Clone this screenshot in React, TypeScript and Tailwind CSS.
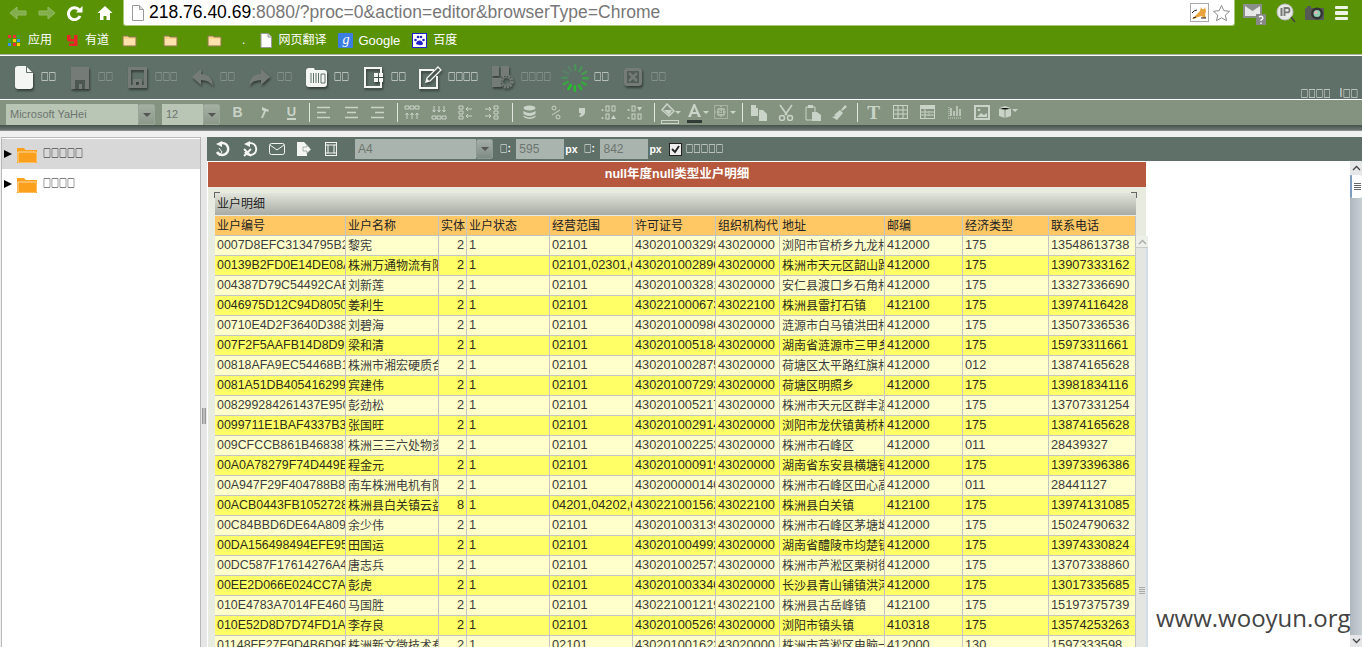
import React from 'react';

// --- Data ---
type Row = [string, string, string, string, string, string, string, string, string, string, string];

const headers = ['业户编号', '业户名称', '实体', '业户状态', '经营范围', '许可证号', '组织机构代', '地址', '邮编', '经济类型', '联系电话'];

const rows: Row[] = [
    ['0007D8EFC3134795B2A', '黎宪', '2', '1', '02101', '430201003298', '43020000', '浏阳市官桥乡九龙村组', '412000', '175', '13548613738'],
    ['00139B2FD0E14DE08A1', '株洲万通物流有限公司', '2', '1', '02101,02301,0', '430201002896', '43020000', '株洲市天元区韶山路口', '412000', '175', '13907333162'],
    ['004387D79C54492CAB1', '刘新莲', '2', '1', '02101', '430201003281', '43020000', '安仁县渡口乡石角村组', '412000', '175', '13327336690'],
    ['0046975D12C94D80501', '姜利生', '2', '1', '02101', '430221000673', '43022100', '株洲县雷打石镇', '412100', '175', '13974116428'],
    ['00710E4D2F3640D3881', '刘碧海', '2', '1', '02101', '430201000980', '43020000', '涟源市白马镇洪田村组', '412000', '175', '13507336536'],
    ['007F2F5AAFB14D8D911', '梁和清', '2', '1', '02101', '430201005184', '43020000', '湖南省涟源市三甲乡村', '412000', '175', '15973311661'],
    ['00818AFA9EC54468B11', '株洲市湘宏硬质合金', '2', '1', '02101', '430201002875', '43020000', '荷塘区太平路红旗村组', '412000', '012', '13874165628'],
    ['0081A51DB4054162991', '宾建伟', '2', '1', '02101', '430201007293', '43020000', '荷塘区明照乡', '412000', '175', '13981834116'],
    ['008299284261437E950', '彭劲松', '2', '1', '02101', '430201005217', '43020000', '株洲市天元区群丰渡口', '412000', '175', '13707331254'],
    ['0099711E1BAF4337B31', '张国旺', '2', '1', '02101', '430201002914', '43020000', '浏阳市龙伏镇黄桥村组', '412000', '175', '13874165628'],
    ['009CFCCB861B4683871', '株洲三三六处物资公司', '2', '1', '02101', '430201002253', '43020000', '株洲市石峰区', '412000', '011', '28439327'],
    ['00A0A78279F74D449E1', '程金元', '2', '1', '02101', '430201000919', '43020000', '湖南省东安县横塘镇村', '412000', '175', '13973396386'],
    ['00A947F29F404788B81', '南车株洲电机有限公司', '2', '1', '02101', '430200000140', '43020000', '株洲市石峰区田心高科', '412000', '011', '28441127'],
    ['00ACB0443FB10527281', '株洲县白关镇云益公司', '8', '1', '04201,04202,0', '430221001562', '43022100', '株洲县白关镇', '412100', '175', '13974131085'],
    ['00C84BBD6DE64A809', '余少伟', '2', '1', '02101', '430201003139', '43020000', '株洲市石峰区茅塘坳村', '412000', '175', '15024790632'],
    ['00DA156498494EFE951', '田国运', '2', '1', '02101', '430201004992', '43020000', '湖南省醴陵市均楚镇村', '412000', '175', '13974330824'],
    ['00DC587F17614276A41', '唐志兵', '2', '1', '02101', '430201002573', '43020000', '株洲市芦淞区栗树街口', '412000', '175', '13707338860'],
    ['00EE2D066E024CC7AF1', '彭虎', '2', '1', '02101', '430201003340', '43020000', '长沙县青山铺镇洪河村', '412000', '175', '13017335685'],
    ['010E4783A7014FE460', '马国胜', '2', '1', '02101', '430221001219', '43022100', '株洲县古岳峰镇', '412100', '175', '15197375739'],
    ['010E52D8D7D74FD1A', '李存良', '2', '1', '02101', '430201005265', '43020000', '浏阳市镇头镇', '410318', '175', '13574253263'],
    ['01148FF27F9D4B6D9F1', '株洲新文微技术有限公司', '2', '1', '02101', '430201001623', '43020000', '株洲市芦淞区电脑一条', '412000', '130', '1597333598'],
];

// --- Helpers ---
const Tofu: React.FC<{ n: number; className?: string; size?: string }> = ({ n, className, size }) => (
    <span className={`inline-block flex-none scale-y-[1.25] whitespace-nowrap font-bold [font-family:'Noto_Sans_CJK_SC',sans-serif] leading-none ${size ?? 'text-[7.5px]'} ${className ?? ''}`}>{'□'.repeat(n)}</span>
);

const Ico: React.FC<{ w: number; h: number; children: React.ReactNode; className?: string }> = ({ w, h, children, className }) => (
    <svg width={w} height={h} viewBox={`0 0 ${w} ${h}`} className={`block flex-none ${className ?? ''}`}>{children}</svg>
);

const shadow = 'drop-shadow-[1px_2px_1px_rgba(0,0,0,0.45)]';
const G = '#757b77';
const W = '#f4f6f4';

// --- Browser chrome ---
const Folder = () => (
    <Ico w={15} h={13}>
        <path d="M1 2h5l1 1h7v9H1z" fill="#fbd48c" stroke="#8a7a50" />
        <path d="M2 5h11v6H2z" fill="#fde2ae" />
    </Ico>
);

const BrowserBar = () => (
    <div className="h-[54px] flex-none bg-[#5a9206] text-white">
        <div className="flex h-[26px]">
            <div className="flex w-[123px] flex-none items-center">
                <Ico w={18} h={16} className="ml-[9px]"><path d="M1 8l7-6v4h9v4H8v4z" fill="#82ad4c" stroke="#93ba62" /></Ico>
                <Ico w={18} h={16} className="ml-[11px]"><path d="M17 8l-7-6v4H1v4h9v4z" fill="#82ad4c" stroke="#93ba62" /></Ico>
                <Ico w={16} h={16} className="ml-[11px]">
                    <path d="M13 11a6 6 0 1 1-.8-6" fill="none" stroke="#fff" strokeWidth="3" />
                    <path d="M15.500 1v6.500H9z" fill="#fff" />
                </Ico>
                <Ico w={16} h={16} className="ml-[14px]"><path d="M8 1l7.500 7H13v7H9.500v-4h-3v4H3V8H.5z" fill="#fff" /></Ico>
            </div>
            <div className="flex h-[26px] w-[1112px] flex-none items-center rounded-b-[3px] border border-t-0 border-[#a8c878] bg-white">
                <Ico w={14} h={16} className="ml-[7px]">
                    <path d="M1.500 .5h7l4 4v11h-11z" fill="#fff" stroke="#9a9a9a" />
                    <path d="M8.500 .5v4h4" fill="#ddd" stroke="#9a9a9a" />
                </Ico>
                <span className="ml-[4px] mt-[1px] text-[17.5px] leading-none text-[#777]"><span className="text-black">218.76.40.69</span>:8080/?proc=0&amp;action=editor&amp;browserType=Chrome</span>
                <Ico w={19} h={19} className="ml-auto">
                    <rect x=".5" y=".5" width="18" height="18" fill="#fff" stroke="#aaa" />
                    <path d="M11 4l1 2h2l1-2 1 4-1 4 1 3h-3l-1-2-4 1-4 2H2l3-3 3-3 2-2z" fill="#e5a43c" />
                    <path d="M2 10q2-3 5-3M3 15l3-1M11 15h5" stroke="#222" fill="none" />
                </Ico>
                <Ico w={19} h={18} className="ml-[3px] mr-[3px]"><path d="M9.500 1.500l2.400 5.200 5.600.6-4.200 3.800 1.200 5.600-5-2.900-5 2.900 1.200-5.600L1.500 7.300l5.600-.6z" fill="#fff" stroke="#8a8a8a" /></Ico>
            </div>
            <div className="flex flex-1 items-center">
                <Ico w={25} h={24} className="ml-[7px] mt-[2px]">
                    <path d="M1 2h19v14H1z" fill="#8a8f8a" />
                    <path d="M3 4l7.500 5L18 4v10H3z" fill="#e8e8e8" />
                    <rect x="14" y="12" width="10" height="11" fill="#888" />
                    <path d="M17 15q2-1.500 3.500 0t-1.500 3v1M19 20.500v1.500" stroke="#fff" strokeWidth="1.300" fill="none" />
                </Ico>
                <Ico w={20} h={22} className="ml-[9px]">
                    <circle cx="9" cy="10" r="8" fill="#e6eae6" stroke="#bbb" />
                    <path d="M15 15l4 5" stroke="#444" strokeWidth="1.500" />
                    <path d="M5.500 6v8" stroke="#777" strokeWidth="2" />
                    <path d="M8.500 14V6h3q2 0 2 2.200t-2 2.200h-3" stroke="#777" strokeWidth="1.800" fill="none" />
                </Ico>
                <Ico w={20} h={16} className="ml-[9px]">
                    <rect x="0" y="3" width="19" height="12" rx="1" fill="#555a55" />
                    <rect x="2" y="1" width="4" height="3" fill="#555a55" />
                    <circle cx="12" cy="8.500" r="6" fill="#333" />
                    <circle cx="12" cy="8.500" r="3.500" fill="#8fd0b0" />
                    <circle cx="11" cy="7.500" r="1.500" fill="#f0b0c0" />
                </Ico>
                <div className="ml-[10px] flex flex-col gap-[2px]">
                    <div className="h-[3.500px] w-[13px] rounded-[1px] bg-[#eef4e4]" />
                    <div className="h-[3.500px] w-[13px] rounded-[1px] bg-[#eef4e4]" />
                    <div className="h-[3.500px] w-[13px] rounded-[1px] bg-[#eef4e4]" />
                </div>
            </div>
        </div>
        <div className="flex h-[28px] items-center text-[12px] leading-none">
            <div className="ml-[8px] grid w-[13px] grid-cols-3 gap-[1px]">
                {['#e33', '#e33', '#3a3', '#3a3', '#fc0', '#39e', '#39e', '#e33', '#fc0'].map((c, i) => (
                    <div key={i} className="h-[3px] w-[3px]" style={{ background: c }} />
                ))}
            </div>
            <span className="ml-[7px]">应用</span>
            <Ico w={11} h={13} className="ml-[15px]"><path d="M0 1h3.500v4H7V1h3.500v11H2V9.500h5v-2H2Q0 7.500 0 5.500z" fill="#e8262a" /></Ico>
            <span className="ml-[7px]">有道</span>
            <div className="ml-[13px]"><Folder /></div>
            <div className="ml-[26px]"><Folder /></div>
            <div className="ml-[29px]"><Folder /></div>
            <span className="ml-[20px]">.</span>
            <Ico w={12} h={15} className="ml-[15px]">
                <path d="M1 .5h7l3.500 3.500v10.500H1z" fill="#fff" stroke="#999" />
                <path d="M8 .5V4h3.500" fill="#ddd" stroke="#999" />
            </Ico>
            <span className="ml-[6px]">网页翻译</span>
            <div className="ml-[12px] flex h-[15px] w-[15px] items-center justify-center rounded-[1px] bg-[#3b7de0] [font-family:'Liberation_Serif',serif] text-[14px] italic">g</div>
            <span className="ml-[5px] text-[13px]">Google</span>
            <Ico w={15} h={15} className="ml-[12px]">
                <rect x=".5" y=".5" width="14" height="14" fill="#fff" stroke="#22c" />
                <path d="M7.500 7.500q3 0 3.500 3.500-.5 1.500-3.500 1t-3.500-1q.5-3.500 3.500-3.500z" fill="#22c" />
                <circle cx="3.500" cy="7" r="1.300" fill="#22c" /><circle cx="6" cy="4" r="1.300" fill="#22c" /><circle cx="9" cy="4" r="1.300" fill="#22c" /><circle cx="11.500" cy="7" r="1.300" fill="#22c" />
            </Ico>
            <span className="ml-[6px]">百度</span>
        </div>
    </div>
);

// --- Main toolbar ---
const mainTools: { w: string; icon: React.ReactNode; n: number; on: boolean; gap: string }[] = [
    { w: 'w-[56px]', n: 2, on: true, gap: 'ml-[8px]', icon: <Ico w={18} h={23} className={shadow}><path d="M0 3q0-3 3-3h8l7 7v13q0 3-3 3H3q-3 0-3-3z" fill={W} /><path d="M11.500 0v6.500H18" fill="none" stroke="#5f7068" /></Ico> },
    { w: 'w-[57px]', n: 2, on: false, gap: 'ml-[9px]', icon: <Ico w={18} h={22} className={shadow}><path d="M0 0h18v22H0z" fill={G} /><path d="M4 13h10v9h-3v-5H8v5H4z" fill="#4c5751" /></Ico> },
    { w: 'w-[64px]', n: 3, on: false, gap: 'ml-[8px]', icon: <Ico w={19} h={21} className={shadow}><path d="M1.500 1.500h16v18h-16z" fill="none" stroke={G} strokeWidth="3" /><path d="M5 12h9v7h-3v-4H8v4H5z" fill={G} /></Ico> },
    { w: 'w-[57px]', n: 2, on: false, gap: 'ml-[7px]', icon: <Ico w={21} h={19} className={shadow}><path d="M9 1v5q11 0 12 12-4-6-12-6v5L0 9z" fill={G} /></Ico> },
    { w: 'w-[57px]', n: 2, on: false, gap: 'ml-[7px]', icon: <Ico w={21} h={19} className={shadow}><path d="M12 1v5Q1 6 0 18q4-6 12-6v5l9-8z" fill={G} /></Ico> },
    { w: 'w-[58px]', n: 2, on: true, gap: 'ml-[7px]', icon: <Ico w={21} h={19} className={shadow}><path d="M0 3q0-3 3-3h5l1 2h9q3 0 3 3v11q0 3-3 3H3q-3 0-3-3z" fill={W} /><path d="M5 5v10M7.500 5v10M10 5v10M12.500 5v10" stroke="#5f7068" /><path d="M15 6h4v9h-4z" fill="none" stroke="#5f7068" /></Ico> },
    { w: 'w-[55px]', n: 2, on: true, gap: 'ml-[8px]', icon: <Ico w={19} h={21} className={shadow}><path d="M17 6V1H1v19h16v-5" fill="none" stroke={W} strokeWidth="2" /><rect x="10" y="6" width="4" height="4" fill={W} /><rect x="15" y="6" width="4" height="4" fill={W} /><rect x="10" y="11" width="4" height="4" fill={W} /><rect x="15" y="11" width="4" height="4" fill={W} /></Ico> },
    { w: 'w-[73px]', n: 4, on: true, gap: 'ml-[5px]', icon: <Ico w={24} h={23} className={shadow}><path d="M15 4H1v18h17V10" fill="none" stroke={W} strokeWidth="2" /><path d="M7 16l1-4L19 1l3 3L11 15z" fill="none" stroke={W} strokeWidth="1.300" /><path d="M7 16l1.500-3 1.500 1.500z" fill={W} /></Ico> },
    { w: 'w-[68px]', n: 4, on: false, gap: 'ml-[7px]', icon: <Ico w={22} h={23} className={shadow}><rect x="0" y="0" width="7" height="10" fill={G} /><rect x="9" y="0" width="8" height="10" fill={G} /><rect x="0" y="12" width="9" height="9" fill={G} /><circle cx="14.500" cy="15.500" r="5.500" fill="none" stroke={G} strokeWidth="3" strokeDasharray="2 1" /><circle cx="14.500" cy="15.500" r="4" fill="none" stroke={G} /></Ico> },
    { w: 'w-[64px]', n: 2, on: true, gap: 'ml-[4px]', icon: (
        <Ico w={30} h={30}>
            {[0, 30, 60, 90, 120, 150, 180, 210, 240, 270, 300, 330].map((a, i) => (
                <rect key={a} x="14" y="1" width="2.400" height="7" rx="1" transform={`rotate(${a} 15 15)`} fill={['#4d8f5a', '#4d8f5a', '#4a9a52', '#3fa048', '#35a83c', '#2cb032', '#26bc2a', '#1fc824', '#38a63e', '#4d8a5c', '#5a8068', '#5a8068'][i]} />
            ))}
        </Ico>
    ) },
    { w: 'w-[60px]', n: 2, on: false, gap: 'ml-[9px]', icon: <Ico w={18} h={19} className={shadow}><rect x="1.500" y="1.500" width="15" height="15" rx="2" fill="#505c56" stroke={G} strokeWidth="3" /><path d="M5 5l8 8M13 5l-8 8" stroke={G} strokeWidth="2.500" /></Ico> },
];

const MainToolbar = () => (
    <div className="flex h-[43px] flex-none items-center bg-[#5f7068] pl-[15px]">
        {mainTools.map((t, i) => (
            <div key={i} className={`flex flex-none items-center ${t.w}`}>
                {t.icon}
                <Tofu n={t.n} className={`${t.gap} -mt-[4px] ${t.on ? 'text-white' : 'text-[#a3aeaa]'}`} />
            </div>
        ))}
        <div className="ml-auto mr-[4px] mt-[30px] flex items-center text-white">
            <Tofu n={4} />
            <span className="ml-[9px] text-[9px] leading-none">|</span>
            <Tofu n={2} className="ml-[1px]" />
        </div>
    </div>
);

// --- Format toolbar ---
const C = '#c9d3c8';
const DK = '#84937f';

const Sep: React.FC<{ className: string }> = ({ className }) => <div className={`h-[19px] w-[1px] flex-none bg-[#dfe6dc] ${className}`} />;

const Cell: React.FC<{ children: React.ReactNode; half?: boolean }> = ({ children, half }) => (
    <div className={`flex flex-none items-center justify-center ${half ? 'w-[26.500px]' : 'w-[27px]'}`}>{children}</div>
);

const Caret = ({ x, y }: { x: number; y: number }) => <path d={`M${x} ${y}h6l-3 3z`} fill={C} />;

const Combo: React.FC<{ label: string; w: string; input: string }> = ({ label, w, input }) => (
    <div className={`flex h-[21px] flex-none rounded-[1px] ${w}`}>
        <div className={`flex items-center bg-[#b9c6b6] pl-[4px] text-[11px] leading-none text-[#6d746e] ${input}`}>{label}</div>
        <div className="flex flex-1 items-center justify-center rounded-[2px] border border-[#9aa89a] bg-gradient-to-b from-[#a4b0a2] to-[#8b988a]">
            <div className="h-0 w-0 border-x-[4px] border-t-[4px] border-x-transparent border-t-[#555]" />
        </div>
    </div>
);

const bars = (a: number[], b: number[]) => (
    <Ico w={16} h={13}>
        <path d={`M${a[0]} 1.500h${a[1]}M${b[0]} 6.500h${b[1]}M${a[0]} 11.500h${a[1]}`} stroke={C} strokeWidth="1.500" />
    </Ico>
);

const stack4 = (
    <Ico w={16} h={15}>
        <path d="M1 1h4v3H1zM6 1h4v3H6zM11 1h4v3h-4z" fill="none" stroke={C} />
        <path d="M3 14V8M8 14V8M13 14V8M1.500 10L3 8l1.500 2M6.500 10L8 8l1.500 2M11.500 10L13 8l1.500 2" fill="none" stroke={C} />
    </Ico>
);

const FormatToolbar = () => (
    <div className="flex h-[25px] flex-none items-end bg-[#84937f] pl-[6px]">
        <Combo label="Microsoft YaHei" w="w-[149px]" input="w-[132px]" />
        <div className="ml-[7px]"><Combo label="12" w="w-[58px]" input="w-[41px]" /></div>
        <div className="mb-[1px] ml-[4px] flex items-center">
            <Cell><span className="text-[14px] font-bold leading-none text-[#c9d3c8]">B</span></Cell>
            <Cell><Ico w={12} h={14}><path d="M3 2l7 3-1 2-2-1-3 7H2l3-7-2-1z" fill={C} /></Ico></Cell>
            <Cell><span className="border-b-2 border-[#c9d3c8] text-[13px] font-bold leading-[13px] text-[#c9d3c8]">U</span></Cell>
            <Sep className="ml-[4px] mr-[2px]" />
            <Cell half>{bars([0, 13], [0, 9])}</Cell>
            <Cell half>{bars([1, 13], [3, 9])}</Cell>
            <Cell half>{bars([1, 13], [5, 9])}</Cell>
            <Sep className="ml-[5.500px] mr-[1px]" />
            <Cell half>{stack4}</Cell>
            <Cell half><div className="rotate-180">{stack4}</div></Cell>
            <Cell half><Ico w={15} h={15}><path d="M1 1h4v3H1zM1 6h4v3H1zM1 11h4v3H1z" fill="none" stroke={C} /><path d="M14 4H8M10 2L8 4l2 2M14 11H8M10 9l-2 2 2 2" fill="none" stroke={C} /></Ico></Cell>
            <Cell half><Ico w={15} h={15}><path d="M10 1h4v3h-4zM10 6h4v3h-4zM10 11h4v3h-4z" fill="none" stroke={C} /><path d="M1 4h6M5 2l2 2-2 2M1 11h6M5 9l2 2-2 2" fill="none" stroke={C} /></Ico></Cell>
            <Sep className="ml-[7px] mr-[3px]" />
            <Cell half><Ico w={13} h={15}><ellipse cx="6.500" cy="3" rx="6" ry="2.500" fill={C} /><path d="M.5 6q6 4 12 0v3q-6 4-12 0zM.5 10.500q6 4 12 0V12q-6 4-12 0z" fill={C} /></Ico></Cell>
            <Cell half><Ico w={10} h={15}><circle cx="3" cy="3" r="2" fill="none" stroke={C} /><circle cx="7" cy="12" r="2" fill="none" stroke={C} /><path d="M1 10L9 5" stroke={C} /></Ico></Cell>
            <Cell half><Ico w={10} h={11}><path d="M2 1h6v5q-1 3-5 4L2 9q2-1 2-3H2z" fill={C} /></Ico></Cell>
            <Cell half><Ico w={16} h={15}><circle cx="1.500" cy="5" r="1" fill={C} /><circle cx="1.500" cy="13" r="1" fill={C} /><rect x="5" y="1" width="3" height="5" fill="none" stroke={C} /><rect x="11" y="1" width="3" height="5" fill="none" stroke={C} /><rect x="5" y="9" width="3" height="5" fill="none" stroke={C} /><path d="M10 14l2.500-4 2.500 4z" fill={C} /></Ico></Cell>
            <Cell half><Ico w={16} h={15}><circle cx="1.500" cy="5" r="1" fill={C} /><circle cx="1.500" cy="13" r="1" fill={C} /><rect x="5" y="1" width="3" height="5" fill="none" stroke={C} /><rect x="5" y="9" width="3" height="5" fill="none" stroke={C} /><rect x="11" y="9" width="3" height="5" fill="none" stroke={C} /><path d="M10 2h5l-2.500 4z" fill={C} /></Ico></Cell>
            <Sep className="ml-[5.500px] mr-[2px]" />
            <Cell><Ico w={22} h={21} className="mt-[3px]"><path d="M7 1l7 7-5 5-7-6z" fill="none" stroke={C} strokeWidth="1.500" /><path d="M4 7h8l-3 5z" fill={C} /><Caret x={15} y={8} /><rect x="1.500" y="17.500" width="17" height="3" fill="none" stroke={C} /></Ico></Cell>
            <Cell><Ico w={22} h={21} className="mt-[3px]"><path d="M1 14L6.500 1h1.500L14 14h-3l-1-3H5l-1 3zM5.800 9h3.400L7.500 4.500z" fill={C} /><Caret x={16} y={8} /><rect x="0" y="17" width="15" height="3" fill="#2f3b34" /></Ico></Cell>
            <Cell><Ico w={22} h={15}><rect x=".5" y=".5" width="13" height="13" fill="none" stroke={C} strokeDasharray="1 1" /><path d="M7 1v12M1 7h12" stroke={C} strokeDasharray="1 1" /><rect x="4" y="4" width="6" height="6" fill="none" stroke={C} /><Caret x={16} y={6} /></Ico></Cell>
            <Sep className="ml-[4px] mr-[2px]" />
            <Cell><Ico w={16} h={17}><path d="M0 1h5v3h2v8H0z" fill={C} /><path d="M8 6h4l4 4v7H8z" fill={C} /></Ico></Cell>
            <Cell><Ico w={16} h={17}><path d="M2 1l7 10M14 1L7 11" stroke={C} strokeWidth="1.600" /><circle cx="4" cy="14" r="2.500" fill="none" stroke={C} strokeWidth="1.500" /><circle cx="12" cy="14" r="2.500" fill="none" stroke={C} strokeWidth="1.500" /></Ico></Cell>
            <Cell><Ico w={16} h={17}><path d="M1 3h9v13H1z" fill="none" stroke={C} /><rect x="3" y="1" width="5" height="3" fill={C} /><path d="M7 8h5l4 3v6H7z" fill={C} /></Ico></Cell>
            <Cell><Ico w={17} h={17}><path d="M10 6l4-5 2 2-5 4z" fill={C} /><path d="M9 6l3 3-6 7-5-3 4-1-2-1z" fill={C} /></Ico></Cell>
            <Sep className="ml-[4px] mr-[2px]" />
            <Cell><span className="[font-family:'Liberation_Serif',serif] text-[19px] font-bold leading-none text-[#c9d3c8]">T</span></Cell>
            <Cell><Ico w={15} h={14}><rect x=".5" y=".5" width="14" height="13" fill="none" stroke={C} /><path d="M5 1v12M10 1v12M1 5h13M1 9h13" stroke={C} /></Ico></Cell>
            <Cell><Ico w={15} h={14}><rect x=".5" y=".5" width="14" height="13" fill="none" stroke={C} /><rect x="1" y="1" width="13" height="3" fill={C} /><path d="M5 4v9M1 7h13M1 10h13" stroke={C} /><path d="M9 6v6" stroke={C} strokeDasharray="1 1" /></Ico></Cell>
            <Cell><Ico w={14} h={14}><path d="M3 3v8M6 6v5M9 1v10M12 4v7" stroke={C} strokeWidth="1.500" /><path d="M0 13h14" stroke={C} strokeDasharray="1 1" /><path d="M1 2v10" stroke={C} strokeDasharray="1 1" /></Ico></Cell>
            <Cell><Ico w={16} h={15}><rect x="1" y="1" width="14" height="13" fill="none" stroke={C} strokeWidth="2" /><path d="M3 12l4-4 3 2 3-2v4z" fill={C} /><circle cx="5" cy="5" r="1.300" fill={C} /></Ico></Cell>
            <Cell><Ico w={21} h={14}><path d="M1 3l6-2 6 2v8l-6 2-6-2z" fill={C} /><path d="M7 5v8M1 3l6 2 6-2" stroke={DK} /><Caret x={14} y={4} /></Ico></Cell>
        </div>
    </div>
);

// --- Sidebar ---
const TreeItem: React.FC<{ n: number; active?: boolean }> = ({ n, active }) => (
    <div className={`flex h-[30px] items-center pl-[2px] ${active ? 'bg-[#d8d8d8]' : ''}`}>
        <div className="h-0 w-0 border-y-[4.500px] border-l-[8px] border-y-transparent border-l-black" />
        <Ico w={20} h={17} className="ml-[5px]">
            <path d="M0 2h7l1.500 2H20v13H0z" fill="#fba01c" />
            <path d="M1 6h18v10H1z" fill="none" stroke="#ffd9a0" />
            <path d="M2 7h17v9H2z" fill="#fba01c" />
        </Ico>
        <Tofu n={n} size="text-[8px]" className="ml-[6px] -mt-[2px] text-black" />
    </div>
);

// --- Report toolbar ---
const ReportToolbar = () => (
    <div className="flex h-[24px] flex-none items-center bg-[#5f7068] text-white">
        <Ico w={16} h={16} className="ml-[7px]"><path d="M8 2a6 6 0 1 1-5 9" fill="none" stroke={W} strokeWidth="2.500" /><path d="M8 0v6L2 3z" fill={W} /><path d="M5 7l3 4-3 4" fill="none" stroke={W} /></Ico>
        <Ico w={16} h={16} className="ml-[12px]"><path d="M8 2a6 6 0 1 1-5 9" fill="none" stroke={W} strokeWidth="2" /><path d="M8 0v6L2 3z" fill={W} /><path d="M2 8l7 7M9 8l-7 7" stroke={W} strokeWidth="1.800" /></Ico>
        <Ico w={16} h={12} className="ml-[11px]"><rect x=".5" y=".5" width="15" height="11" rx="2" fill="none" stroke={W} /><path d="M1 2l7 5 7-5" fill="none" stroke={W} /></Ico>
        <Ico w={15} h={15} className="ml-[11px]"><path d="M1 0h7l3 3v3H7v3h4v5H1z" fill={W} /><path d="M7 5h4V2.500L15 7.500l-4 4V9H7z" fill={W} stroke="#5f7068" strokeWidth=".5" /></Ico>
        <Ico w={12} h={14} className="ml-[14px]"><rect x=".5" y=".5" width="11" height="13" fill="none" stroke={W} /><rect x="3" y="3" width="6" height="8" fill="none" stroke={W} /><path d="M1 3h2M1 11h2M9 3h2M9 11h2" stroke={W} /></Ico>
        <div className="ml-[18px] flex h-[20px] w-[138px] flex-none">
            <div className="flex w-[121px] items-center bg-[#aab4af] pl-[3px] text-[12px] leading-none text-[#6d746e]">A4</div>
            <div className="flex flex-1 items-center justify-center rounded-[2px] border border-[#8d9a92] bg-gradient-to-b from-[#a4aea8] to-[#7f8c85]">
                <div className="h-0 w-0 border-x-[4px] border-t-[4px] border-x-transparent border-t-[#555]" />
            </div>
        </div>
        <Tofu n={1} className="ml-[7px] -mt-[3px]" /><span className="text-[10px] font-bold leading-none">:</span>
        <div className="ml-[5.500px] flex h-[20px] w-[48px] flex-none items-center bg-[#aab4af] pl-[3px] text-[12px] leading-none text-[#6d746e]">595</div>
        <span className="ml-[1px] text-[10.500px] font-bold leading-none">px</span>
        <Tofu n={1} className="ml-[6.500px] -mt-[3px]" /><span className="text-[10px] font-bold leading-none">:</span>
        <div className="ml-[5.500px] flex h-[20px] w-[48px] flex-none items-center bg-[#aab4af] pl-[3px] text-[12px] leading-none text-[#6d746e]">842</div>
        <span className="ml-[1px] text-[10.500px] font-bold leading-none">px</span>
        <Ico w={13} h={13} className="ml-[7px]"><rect x=".5" y=".5" width="12" height="12" fill="#eee" stroke="#222" /><path d="M3 6l3 3 4-6" fill="none" stroke="#222" strokeWidth="1.800" /></Ico>
        <Tofu n={5} className="ml-[4px] -mt-[3px]" />
    </div>
);

// --- Table ---
const colClass = ['w-[131px]', 'w-[93px]', 'w-[28px]', 'w-[83px]', 'w-[83px]', 'w-[83px]', 'w-[64px]', 'w-[105px]', 'w-[78px]', 'w-[86px]', 'w-[87px]'];
const thClass = 'h-[20px] overflow-hidden whitespace-nowrap border-b border-r border-[#c4c4c4] px-[2px] text-left text-[12px] font-normal leading-none text-[#222]';

const cellSize = (j: number) => {
    if (j === 0) return 'text-[12.400px]';
    if (j === 1 || j === 7) return 'text-[12px]';
    return 'text-[12.800px]';
};

const DataTable = () => (
    <table className="w-[921px] table-fixed border-separate border-spacing-0">
        <colgroup>
            {colClass.map((c, i) => <col key={i} className={c} />)}
        </colgroup>
        <thead>
            <tr className="bg-[#ffc864]">
                {headers.map((h) => <th key={h} className={thClass}>{h}</th>)}
            </tr>
        </thead>
        <tbody>
            {rows.map((r, i) => (
                <tr key={r[0]} className={i % 2 === 0 ? 'bg-[#ffffcc] text-[#3c3c3c]' : 'bg-[#ffff66] text-[#2c2c18]'}>
                    {r.map((v, j) => (
                        <td
                            key={j}
                            className={`h-[20px] overflow-hidden whitespace-nowrap border-b border-r border-[#c4c4c4] px-[2px] leading-none ${cellSize(j)} ${j === 2 ? 'text-right' : ''}`}
                        >
                            {v}
                        </td>
                    ))}
                </tr>
            ))}
        </tbody>
    </table>
);

const ScrollArrow = ({ down, color = '#444' }: { down?: boolean; color?: string }) => (
    <Ico w={9} h={6} className={down ? 'rotate-180' : ''}><path d="M1 5l3.500-3.500L8 5" fill="none" stroke={color} strokeWidth="1.300" /></Ico>
);

// --- Page ---
export default function App() {
    return (
        <div className="relative flex h-[647px] w-full flex-col overflow-hidden bg-[#f0f0f0] [font-family:'Liberation_Sans','Noto_Sans_CJK_SC',sans-serif]">
            <BrowserBar />
            <div className="h-[1px] flex-none bg-[#a8aaa4]" />
            <div className="h-[1px] flex-none bg-white" />
            <MainToolbar />
            <div className="h-[1px] flex-none bg-white" />
            <FormatToolbar />
            <div className="h-[5px] flex-none bg-gradient-to-b from-[#46524c] to-[#6b7670]" />
            <div className="h-[1px] flex-none bg-[#8c8c8c]" />

            <div className="flex min-h-0 flex-1 pt-[6px]">
                {/* sidebar */}
                <div className="ml-[1px] w-[200px] flex-none border-x border-t border-[#b8b8b8] bg-white pt-[1px]">
                    <TreeItem n={5} active />
                    <TreeItem n={4} />
                </div>
                {/* splitter */}
                <div className="flex w-[6px] flex-none items-center justify-center bg-[#e6e6e6]">
                    <div className="mt-[48px] h-[16px] w-[4px] border-x border-[#999] bg-[#bbb]" />
                </div>
                {/* report */}
                <div className="flex min-w-0 flex-1 flex-col">
                    <ReportToolbar />
                    <div className="flex min-h-0 flex-1">
                        <div className="w-[941px] flex-none overflow-hidden bg-white pl-[1px]">
                            <div className="flex h-full w-[938px] flex-col">
                                <div className="mt-[1px] flex h-[25px] flex-none items-center justify-center bg-[#b5583e] text-[12.500px] font-bold leading-none text-white">null年度null类型业户明细</div>
                                <div className="relative min-h-0 flex-1 bg-[#e8ebdf] pl-[7px] pt-[6px]">
                                    <div className="absolute left-[6px] top-[5px] h-[6px] w-[6px] border-l border-t border-[#666]" />
                                    <div className="absolute left-[923px] top-[5px] h-[6px] w-[6px] border-r border-t border-[#666]" />
                                    <div className="flex h-[23px] w-[921px] items-center border-b border-[#e8ebdf] bg-gradient-to-b from-[#e2e5da] to-[#a8aba4] pl-[2px] text-[12px] leading-none text-[#222]">业户明细</div>
                                    <div className="flex">
                                        <DataTable />
                                        <div className="mt-[20px] flex w-[12px] flex-none flex-col bg-[#e4e6e2]">
                                            <div className="flex h-[12px] items-center justify-center border-b border-[#c8ccc8] bg-[#eceee8]"><ScrollArrow color="#aaa" /></div>
                                            <div className="flex-1 border-r-2 border-[#d4deea]" />
                                        </div>
                                    </div>
                                    <div className="absolute left-[931px] top-[400px] flex w-[6px] flex-col gap-[1px]">
                                        <div className="h-[1px] bg-[#aaa]" /><div className="h-[1px] bg-[#aaa]" /><div className="h-[1px] bg-[#aaa]" /><div className="h-[1px] bg-[#aaa]" />
                                    </div>
                                </div>
                            </div>
                        </div>
                        <div className="flex-1 bg-white" />
                        {/* page scrollbar */}
                        <div className="flex w-[12px] flex-none flex-col bg-gradient-to-r from-[#aeb8be] to-[#c8d0d4]">
                            <div className="flex h-[14px] items-center justify-center bg-[#e4e6e8]"><ScrollArrow /></div>
                            <div className="flex h-[23px] flex-col items-center justify-center gap-[1px] rounded-[2px] border-l-2 border-[#7d9cc0] bg-white">
                                <div className="h-[1px] w-[7px] bg-[#666]" /><div className="h-[1px] w-[7px] bg-[#666]" /><div className="h-[1px] w-[7px] bg-[#666]" /><div className="h-[1px] w-[7px] bg-[#666]" />
                            </div>
                            <div className="flex-1" />
                            <div className="flex h-[12px] items-center justify-center bg-[#e4e6e8]"><ScrollArrow down /></div>
                        </div>
                    </div>
                </div>
            </div>

            {/* watermark */}
            <div className="absolute left-[1156px] top-[603px] text-[24px] leading-[30px] text-[#444] [font-family:'Open_Sans',sans-serif]">www.wooyun.org</div>
        </div>
    );
}
